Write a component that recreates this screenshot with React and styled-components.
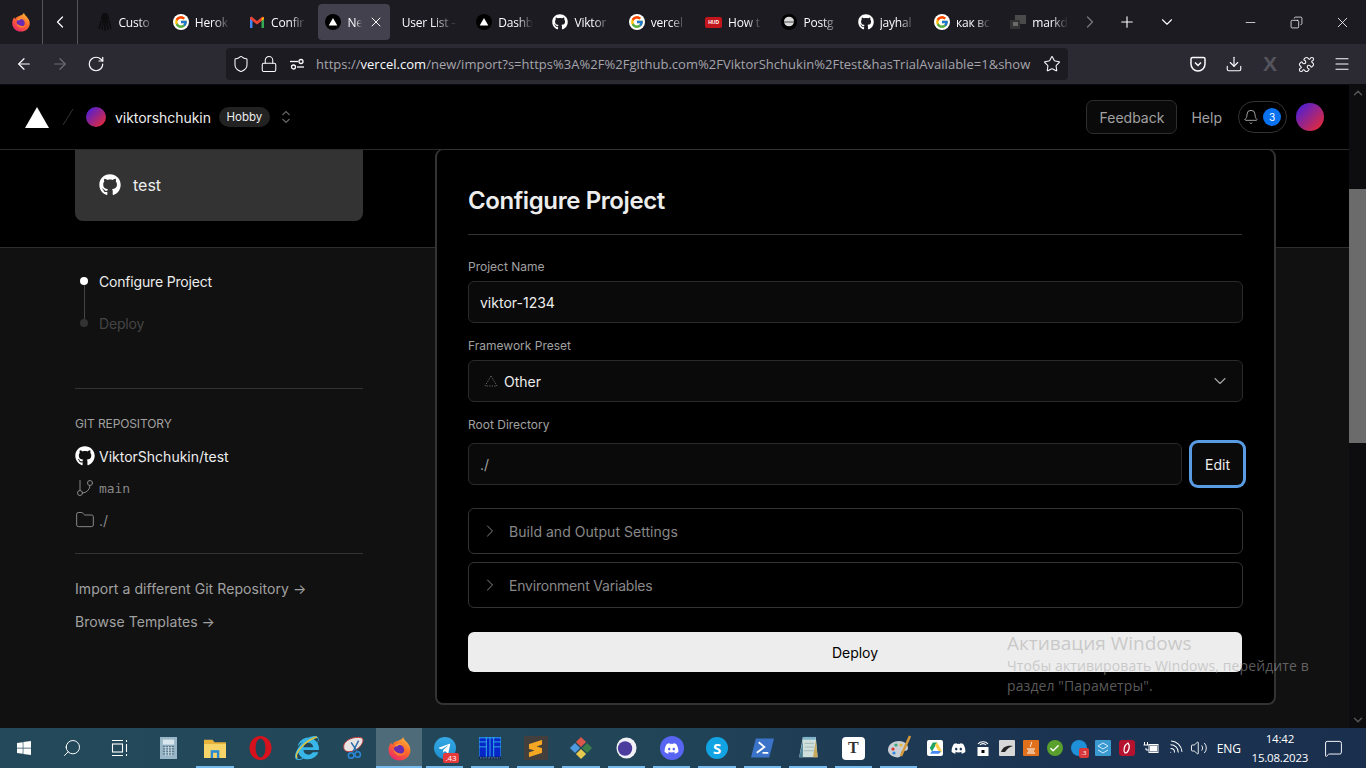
import React from 'react';
import styled, { createGlobalStyle, css } from 'styled-components';
import {
  ArrowLeft, ArrowRight, RotateCw, Shield, Lock, Star, Download, Puzzle, Menu,
  ChevronLeft, ChevronRight, ChevronDown, ChevronUp, Plus, Minus, X, Copy, Bell, GitBranch, Folder,
  Search, Volume2, Wifi, MessageSquare, Check,
} from 'lucide-react';
import { FaGithub, FaTelegramPlane, FaDiscord, FaWindows, FaInternetExplorer } from 'react-icons/fa';
import { FcGoogle } from 'react-icons/fc';
import { SiSublimetext } from 'react-icons/si';

const Global = createGlobalStyle`
  html, body { margin: 0; padding: 0; height: 100%; overflow: hidden; background: #111; }
  * { box-sizing: border-box; }
  #root { height: 100%; }
`;

const Screen = styled.div`
  width: 1366px; height: 768px; display: flex; flex-direction: column; position: relative; overflow: hidden;
  font-family: Inter, "Liberation Sans", sans-serif; color: #ededed;
`;

/* ---------- browser chrome ---------- */
const TabStrip = styled.div`
  height: 44px; flex: none; display: flex; align-items: center; background: #1c1b22; color: #fbfbfe;
  font-family: "Open Sans", sans-serif; font-size: 12px;
`;
const StripBlock = styled.div`
  width: ${p => p.$w}px; height: 44px; flex: none; display: flex; align-items: center; justify-content: center;
  border-right: 1px solid #55545c;
`;
const TabList = styled.div`
  width: 985px; margin-left: 9px; display: flex; overflow: hidden; flex: none;
`;
const Tab = styled.div`
  width: ${p => (p.$bare ? 74.5 : 76.3)}px; flex: none; height: 36px; padding: 0 ${p => (p.$bare ? 9.5 : 9.5)}px; display: flex; align-items: center; gap: 6px;
  border-radius: 4px; position: relative;
  ${p => p.$active && css`background: #42414d; margin: 0 2px; width: 72.3px; padding: 0 6px 0 7.5px;`}
`;
const TabLabel = styled.span`
  flex: 1; min-width: 0; overflow: hidden; white-space: nowrap; letter-spacing: -0.2px;
  -webkit-mask-image: linear-gradient(90deg, #000 55%, transparent 100%);
  mask-image: linear-gradient(90deg, #000 55%, transparent 100%);
`;
const StripBtn = styled.div`
  width: 36px; height: 36px; flex: none; display: flex; align-items: center; justify-content: center;
  margin-left: ${p => p.$ml || 0}px; color: ${p => (p.$dim ? '#77767e' : '#fbfbfe')};
`;
const WindowControls = styled.div`margin-left: auto; display: flex;`;
const WindowBtn = styled.div`
  width: 46.3px; height: 44px; display: flex; align-items: center; justify-content: center; color: #fbfbfe;
`;

const Toolbar = styled.div`
  height: 40px; flex: none; padding: 0 6px; display: flex; align-items: center; background: #2b2a33; color: #fbfbfe;
`;
const ToolBtn = styled.div`
  width: 36px; height: 36px; flex: none; display: flex; align-items: center; justify-content: center;
  color: ${p => (p.$dim ? '#6d6c73' : '#fbfbfe')};
`;
const XMark = styled.span`
  font: 700 21px "Liberation Sans", sans-serif; color: #55545c;
`;
const UrlBar = styled.div`
  width: 842px; height: 32px; margin-left: 112px; margin-right: auto; border-radius: 4px; background: #1c1b22;
  display: flex; align-items: center; padding: 0 2px 0 1px;
`;
const UrlIcon = styled.div`
  width: 28px; height: 28px; flex: none; display: flex; align-items: center; justify-content: center;
`;
const UrlText = styled.div`
  flex: 1; min-width: 0; margin-left: 5px; white-space: nowrap; overflow: hidden; color: #a5a5ab;
  font: 13px "Open Sans", sans-serif; letter-spacing: 0.02px;
`;
const UrlHost = styled.span`color: #fbfbfe;`;

/* ---------- site ---------- */
const Viewport = styled.div`flex: 1; min-height: 0; display: flex;`;
const Site = styled.div`flex: 1; min-width: 0; display: flex; flex-direction: column; background: #000;`;
const Nav = styled.div`
  height: 66px; flex: none; display: flex; align-items: center; padding: 0 25px; background: #000;
  border-top: 1px solid #0b0b14; border-bottom: 1px solid #2b2b2b; font-size: 14px;
`;
const NavName = styled.span`margin-left: 9px; color: #ededed; letter-spacing: -0.05px;`;
const PlanBadge = styled.span`
  margin-left: 8px; height: 20px; width: 51px; border-radius: 10px; background: #222; color: #ededed;
  font-size: 11.5px; display: flex; align-items: center; justify-content: center;
`;
const Avatar = styled.div`
  width: ${p => p.$size}px; height: ${p => p.$size}px; border-radius: 50%; flex: none;
  background: linear-gradient(135deg, #4f1fd6 10%, #e32a3a 90%);
  ${p => p.$ml && css`margin-left: ${p.$ml}px;`}
`;
const NavRight = styled.div`margin-left: auto; display: flex; align-items: center;`;
const FeedbackBtn = styled.div`
  width: 91px; height: 34px; border: 1px solid #2e2e2e; border-radius: 7px; background: #0a0a0a; color: #a1a1a1;
  display: flex; align-items: center; justify-content: center;
`;
const HelpLink = styled.span`margin-left: 14px; color: #a1a1a1;`;
const BellPill = styled.div`
  margin-left: 16px; width: 49px; height: 32px; border: 1px solid #333; border-radius: 16px;
  display: flex; align-items: center; gap: 4px; padding-left: 4px; color: #a1a1a1;
`;
const BellCount = styled.span`
  width: 18px; height: 18px; border-radius: 50%; background: #0a72ef; color: #fff; font-size: 10px;
  display: flex; align-items: center; justify-content: center;
`;

const PageBody = styled.div`
  flex: 1; min-height: 0; display: flex; gap: 72px; padding-left: 75px;
  background: linear-gradient(#000 97px, #2e2e2e 97px, #2e2e2e 98px, #111 98px);
`;
const Side = styled.div`width: 288px; flex: none; display: flex; flex-direction: column;`;
const RepoCard = styled.div`
  height: 71px; flex: none; background: #333; border-radius: 0 0 8px 8px; display: flex; align-items: center;
  padding: 0 0 2px 24px; gap: 12px; font-size: 16px; color: #ededed; margin-bottom: 49px;
`;
const Steps = styled.div`display: flex; flex-direction: column; gap: 20px; margin-bottom: 54px;`;
const Step = styled.div`
  height: 22px; display: flex; align-items: center; gap: 11px; padding-left: 5px; position: relative;
  font-size: 14px; letter-spacing: -0.18px; color: ${p => (p.$on ? '#ededed' : '#444')};
  &::before { content: ''; width: 8px; height: 8px; border-radius: 50%; background: ${p => (p.$on ? '#fff' : '#333')}; }
  ${p => p.$on && css`&::after { content: ''; position: absolute; left: 8.5px; top: 15px; width: 1px; height: 34px; background: #444; }`}
`;
const SideRule = styled.div`height: 1px; background: #333; flex: none;`;
const SideTitle = styled.div`margin: 27px 0 12px; height: 16px; line-height: 16px; font-size: 12px; color: #a1a1a1; letter-spacing: -0.1px;`;
const RepoRow = styled.div`
  height: 24px; margin-bottom: 8px; display: flex; align-items: center; gap: 4px; font-size: 14px;
  color: ${p => (p.$main ? '#ededed' : '#888')};
`;
const Mono = styled.span`font: 13px "DejaVu Sans Mono", "Liberation Mono", monospace; letter-spacing: -0.1px;`;
const SideLinks = styled.div`margin-top: 25px; display: flex; flex-direction: column; gap: 13px;`;
const SideLink = styled.div`height: 20px; line-height: 20px; font-size: 14px; letter-spacing: 0.07px; color: #a1a1a1;`;
const Spacer = styled.div`height: ${p => p.$h}px; flex: none;`;

const Card = styled.div`
  width: 841px; height: 556px; margin-top: -1px; flex: none; background: #000; border: 2px solid #333; border-top-width: 1px; border-radius: 8px;
  padding: 35px 31px 0; display: flex; flex-direction: column; position: relative;
`;
const CardTitle = styled.h1`
  margin: 0; height: 32px; line-height: 32px; font-size: 24px; font-weight: 600; color: #ededed; letter-spacing: -0.4px;
`;
const CardRule = styled.div`height: 1px; background: #333; margin: 17px 1px 24px 0; flex: none;`;
const FieldLabel = styled.div`
  height: 16px; line-height: 16px; font-size: 12px; color: #a1a1a1; margin-top: ${p => p.$mt || 0}px; margin-bottom: ${p => p.$mb}px;
`;
const Field = styled.div`
  height: 42px; flex: ${p => (p.$grow ? 1 : 'none')}; background: #0a0a0a; border: 1px solid #2a2a2a; border-radius: 6px;
  display: flex; align-items: center; padding: 0 12px 0 11px; font-size: 14px; color: ${p => (p.$dim ? '#a1a1a1' : '#ededed')};
`;
const PresetIcon = styled.span`display: flex; margin-left: 4px;`;
const FieldText = styled.span`margin-left: ${p => p.$ml || 0}px; margin-right: auto;`;
const FieldRow = styled.div`display: flex; gap: 10px; margin-bottom: 23px;`;
const EditBtn = styled.div`
  width: 51px; height: 42px; flex: none; background: #0a0a0a; border-radius: 6px; color: #ededed; font-size: 14px;
  display: flex; align-items: center; justify-content: center; box-shadow: 0 0 0 3px #5a9ce4;
`;
const Accordion = styled.div`
  height: 46px; flex: none; border: 1px solid #333; border-radius: 6px; margin-bottom: 8px; display: flex; align-items: center;
  padding-left: 11px; gap: 9px; font-size: 14px; color: #888; letter-spacing: ${p => p.$ls}px;
`;
const DeployBtn = styled.div`
  height: 40px; margin: 16px 1px 0 0; flex: none; background: #ededed; color: #000; border-radius: 6px; font-size: 14px;
  display: flex; align-items: center; justify-content: center;
`;

const Scrollbar = styled.div`
  width: 17px; flex: none; background: #0d0d0f; display: flex; flex-direction: column; align-items: center; color: #555;
`;
const ScrollArrow = styled.div`height: 17px; flex: none; display: flex; align-items: center; justify-content: center;`;
const ScrollTrack = styled.div`flex: 1; width: 100%; padding-top: 88px;`;
const ScrollThumb = styled.div`width: 100%; height: 254px; background: #6b6b6b;`;

const Watermark = styled.div`
  position: absolute; left: 1007px; top: 630px; color: rgba(169,169,169,.54); font-family: "Open Sans", sans-serif; pointer-events: none;
`;
const WatermarkHead = styled.div`font-size: 19px; line-height: 26px;`;
const WatermarkBody = styled.div`font-size: 14px; line-height: 20px; letter-spacing: 0.1px; width: 320px;`;

/* ---------- taskbar ---------- */
const Taskbar = styled.div`
  height: 40px; flex: none; display: flex; align-items: center; color: #fff;
  background: linear-gradient(90deg, #23495b 0%, #224658 45%, #1b3452 75%, #1a2f4e 100%);
  font-family: "Open Sans", sans-serif;
`;
const TaskBtn = styled.div`
  width: ${p => p.$w}px; height: 40px; flex: none; display: flex; align-items: center; justify-content: center; position: relative;
`;
const AppList = styled.div`display: flex; margin-left: 2.5px;`;
const App = styled.div`
  width: ${p => (p.$wide ? 46.1 : 45.4)}px; height: 40px; flex: none; display: flex; align-items: center; justify-content: center; position: relative;
  ${p => p.$active && css`background: rgba(255,255,255,.2);`}
  ${p => p.$running && css`
    &::after { content: ''; position: absolute; bottom: 0; height: 2px; background: #76b9ed;
      left: ${p.$active ? 0 : 4}px; right: ${p.$active ? 0 : 4}px; }
  `}
`;
const BadgeTag = styled.span`
  position: absolute; left: 21px; top: 25px; width: 16px; height: 10px; background: #e5393b; border-radius: 2px; font-size: 8px; line-height: 10px;
  text-align: center; color: #fff;
`;
const Tray = styled.div`display: flex; margin-left: 1.5px; align-items: center;`;
const TrayItem = styled.div`width: 24px; height: 40px; display: flex; align-items: center; justify-content: center; flex: none; position: relative;`;
const Lang = styled.div`width: 36px; text-align: center; font-size: 12px; flex: none;`;
const Clock = styled.div`width: 66px; flex: none; text-align: center; font-size: 11.5px; line-height: 19px; letter-spacing: -0.2px;`;
const Notif = styled.div`width: 42px; flex: none; display: flex; justify-content: center;`;

/* ---------- drawings ---------- */
const Firefox = ({ size = 22, id }) => (
  <svg width={size} height={size} viewBox="0 0 24 24">
    <defs>
      <linearGradient id={`ff${id}`} x1="0.8" y1="0" x2="0.2" y2="1">
        <stop offset="0" stopColor="#ffbd3a" /><stop offset="0.45" stopColor="#ff6a2a" /><stop offset="1" stopColor="#e8256b" />
      </linearGradient>
    </defs>
    <path d="M15.5 1c.6 2.5 2.2 3.5 3.8 5.2C21.4 8.300 22.500 11 22.500 13.500 22.500 19.300 17.800 23.500 12 23.500S1.500 19.300 1.500 13.500C1.500 10.800 2.300 8.200 4 6.200c.1 1 .5 1.800 1 2.300.7-1.700 2.300-3 4.200-3.500C11.800 4.200 14.700 3.500 15.500 1Z" fill={`url(#ff${id})`} />
    <circle cx="11.500" cy="13.300" r="5" fill="#6a2bb0" />
    <path d="M6 12c0 4 3 7 6.500 7 3 0 5.500-2.200 6-5-1 1.800-3 3-5.200 2.800C9.800 16.500 7.500 15 6 12Z" fill="#ff7a2a" />
    <path d="M7 10c2-2.500 6-3.300 8-1.500-2.500-.3-4.500 0-5 1.300Z" fill="#ffa33a" />
  </svg>
);
const VercelFav = () => (
  <svg width="16" height="16" viewBox="0 0 16 16" style={{ flex: 'none' }}><circle cx="8" cy="8" r="8" fill="#000" /><path d="M8 4l4.300 7.500H3.700Z" fill="#fff" /></svg>
);
const GoogleWrap = styled.span`
  width: 16px; height: 16px; flex: none; border-radius: 50%; background: #fff; display: flex; align-items: center; justify-content: center;
`;
const GoogleFav = () => <GoogleWrap><FcGoogle size={14} /></GoogleWrap>;
const GitFav = () => <FaGithub size={16} color="#fff" style={{ flex: 'none' }} />;
const GmailFav = () => (
  <svg width="16" height="16" viewBox="0 0 16 16" style={{ flex: 'none' }}>
    <path d="M1 3.500h2.500V14H1Z" fill="#4285f4" /><path d="M12.500 3.500H15V14h-2.500Z" fill="#34a853" />
    <path d="M1 3.500l1.500-1L8 7l5.500-4.500 1.500 1V5L8 10.500 1 5Z" fill="#ea4335" /><path d="M12.500 4.500L15 3v2l-2.500 2Z" fill="#fbbc04" />
  </svg>
);
const GhostFav = () => (
  <svg width="16" height="20" viewBox="0 0 16 20" style={{ flex: 'none' }}>
    <ellipse cx="8" cy="6" rx="4" ry="5" fill="#0d0d10" /><path d="M4 9L2 17M6 10l-1 8M8 10v9M10 10l1 8M12 9l2 8" stroke="#0d0d10" strokeWidth="1.600" />
  </svg>
);
const HudFav = styled.span`
  width: 17px; height: 11px; flex: none; background: #c3161c; border-radius: 2px; font: 700 5px/11px "Liberation Sans", sans-serif; color: #fff; text-align: center;
`;
const PostgresFav = () => (
  <svg width="16" height="16" viewBox="0 0 16 16" style={{ flex: 'none' }}>
    <circle cx="8" cy="8" r="8" fill="#000" /><ellipse cx="8" cy="7.500" rx="5" ry="4.800" fill="#d8d8d8" /><path d="M3 8h10" stroke="#444" strokeWidth="1" />
  </svg>
);
const MarkFav = () => (
  <svg width="16" height="16" viewBox="0 0 16 16" style={{ flex: 'none' }}>
    <rect x="5" y="1" width="11" height="9" fill="#4a4a4a" /><rect x="0" y="6" width="10" height="9" fill="#333" /><rect x="3" y="8" width="5" height="4" fill="#6a6a6a" />
  </svg>
);
const PermIcon = () => (
  <svg width="16" height="16" viewBox="0 0 16 16" fill="none" stroke="#fbfbfe" strokeWidth="1.300">
    <path d="M1 5.500h8" /><circle cx="12" cy="5.500" r="2" /><circle cx="4.500" cy="11" r="2" /><path d="M8 11h7" />
  </svg>
);
const PocketIcon = () => (
  <svg width="18" height="18" viewBox="0 0 18 18" fill="none" stroke="#fbfbfe" strokeWidth="1.500">
    <path d="M3.500 2.500h11a1.500 1.500 0 0 1 1.500 1.500v5a7 7 0 0 1-14 0V4a1.500 1.500 0 0 1 1.500-1.500Z" /><path d="M6 7.500l3 3 3-3" />
  </svg>
);
const PresetTriangle = () => (
  <svg width="14" height="12" viewBox="0 0 14 12" fill="none" stroke="#666" strokeWidth="1" strokeDasharray="1.300 1.300"><path d="M7 1l6 10H1Z" /></svg>
);
const UpDown = () => (
  <svg width="16" height="16" viewBox="0 0 16 16" fill="none" stroke="#666" strokeWidth="1.200" style={{ marginLeft: 8 }}>
    <path d="M4.500 6L8 2.500 11.500 6M4.500 10L8 13.500 11.500 10" />
  </svg>
);
const Logo = () => <svg width="24" height="21" viewBox="0 0 24 21"><path d="M12 0l12 21H0Z" fill="#fff" /></svg>;
const Slash = () => (
  <svg width="12" height="20" viewBox="0 0 12 20" style={{ margin: '0 12px 0 13px' }}><path d="M11 2L1 18" stroke="#333" strokeWidth="1" /></svg>
);
const TaskView = () => (
  <svg width="18" height="18" viewBox="0 0 18 18" fill="none" stroke="#fff" strokeWidth="1.100">
    <path d="M1 1.500h11M1 16.500h11M15.500 1v2M15.500 5v8M15.500 15v2" /><rect x="1.500" y="5" width="10" height="8" />
  </svg>
);
const Calc = () => (
  <svg width="17" height="22" viewBox="0 0 18 26" preserveAspectRatio="none">
    <rect x="0" y="0" width="18" height="26" fill="#9ab7c8" /><rect x="3" y="3" width="12" height="6" fill="#d9e6ee" />
    <path d="M3 11h12M3 14h12M3 17h12M3 20h12" stroke="#5e7e90" strokeWidth="1.500" /><path d="M6 11v11M9 11v11M12 11v11" stroke="#cfdde6" strokeWidth="1" />
  </svg>
);
const FolderApp = () => (
  <svg width="22" height="20" viewBox="0 0 23 23" preserveAspectRatio="none">
    <path d="M0 2h9l2 3h12v5H0Z" fill="#e7b33c" /><rect x="0" y="7" width="23" height="16" fill="#f7d569" /><rect x="7" y="14" width="9" height="9" fill="#2a8bd2" /><rect x="9.500" y="17" width="4" height="6" fill="#f7d569" />
  </svg>
);
const Opera = () => (
  <svg width="23" height="24" viewBox="0 0 23 24"><ellipse cx="11.500" cy="12" rx="11" ry="12" fill="#d8121c" /><ellipse cx="11.500" cy="12" rx="5" ry="9.500" fill="#1f4456" /></svg>
);
const IEWrap = styled.span`position: relative; display: flex;`;
const IERing = styled.svg`position: absolute; left: -2px; top: -2px;`;
const IE = () => (
  <IEWrap>
    <FaInternetExplorer size={24} color="#38b6e8" />
    <IERing width="28" height="28" viewBox="0 0 28 28" fill="none"><path d="M4 24C1 20 12 6 24 3" stroke="#e8c53a" strokeWidth="1.500" /></IERing>
  </IEWrap>
);
const Snip = () => (
  <svg width="26" height="26" viewBox="0 0 26 28" fill="none">
    <path d="M3 12C3 6 14 1 22 3c3 1 2 6-2 10-5 5-12 6-15 4-2-1-2-3-2-5Z" fill="#e9e4e4" stroke="#b33" strokeWidth="1" />
    <path d="M11 8l6 9M19 6l-6 12" stroke="#2c6da8" strokeWidth="1.600" /><circle cx="18" cy="21" r="3" stroke="#2c8ad8" strokeWidth="1.600" /><circle cx="11" cy="22" r="3" stroke="#2c8ad8" strokeWidth="1.600" />
  </svg>
);
const TelegramWrap = styled.span`
  width: 22px; height: 22px; border-radius: 50%; background: linear-gradient(#36a9e6, #1d8fce); display: flex; align-items: center; justify-content: center; color: #fff;
`;
const GridApp = () => (
  <svg width="22" height="23" viewBox="0 0 24 28" preserveAspectRatio="none">
    <rect x="0" y="0" width="24" height="25" fill="#0626c9" /><path d="M0 1h24M0 6h8M16 6h8M0 12h8M16 12h8" stroke="#35c0e8" strokeWidth="1" /><path d="M0 0v25M8 0v25M12 0v25M16 0v25M24 0v25" stroke="#35c0e8" strokeWidth="1" />
    <rect x="0" y="24" width="24" height="3" fill="#0b2038" /><path d="M1 25.500h22" stroke="#8ad" strokeDasharray="2 1" />
  </svg>
);
const SublimeWrap = styled.span`
  width: 24px; height: 24px; background: #423f3c; display: flex; align-items: center; justify-content: center; color: #f5a623;
`;
const GitApp = () => (
  <svg width="24" height="24" viewBox="0 0 26 26">
    <path d="M13 1l5.500 5.500-5.500 5.500-5.500-5.500Z" fill="#d9574b" /><path d="M6.500 7.500L12 13l-5.500 5.500L1 13Z" fill="#4f9be0" />
    <path d="M19.500 7.500L25 13l-5.500 5.500L14 13Z" fill="#3d7d4a" /><path d="M13 14l5.500 5.500L13 25l-5.500-5.500Z" fill="#e7c94f" />
  </svg>
);
const EclipseApp = () => (
  <svg width="21" height="22" viewBox="0 0 22 24" preserveAspectRatio="none"><ellipse cx="11" cy="12" rx="10.500" ry="11.500" fill="#f1f1f6" /><ellipse cx="9.500" cy="12.500" rx="7.500" ry="8" fill="#4b3c9e" /></svg>
);
const DiscordWrap = styled.span`
  width: 24px; height: 24px; border-radius: 50%; background: #5865f2; color: #fff; display: flex; align-items: center; justify-content: center;
`;
const SkypeTile = styled.span`
  width: 22px; height: 22px; border-radius: 50%; background: #12a3e2; color: #fff; display: flex; align-items: center; justify-content: center;
  font: 700 15px "Open Sans", sans-serif;
`;
const PowerShell = () => (
  <svg width="23" height="20" viewBox="0 0 24 20">
    <path d="M5 0h19l-5 20H0Z" fill="#3a73c8" /><path d="M8 4l6 5-8 6M12 15h6" stroke="#fff" strokeWidth="1.800" fill="none" />
  </svg>
);
const Notepad = () => (
  <svg width="23" height="24" viewBox="0 0 24 26">
    <path d="M7 1h14l2 22H3Z" fill="#cfe0dc" /><path d="M7 1h14v3H7Z" fill="#7fb3c9" /><path d="M9 8h10M9 12h10M8 16h11" stroke="#a0b5b5" /><path d="M3 23L7 5v18Z" fill="#4b7f96" /><path d="M18 23h5l-2-18Z" fill="#c9a85a" />
  </svg>
);
const TypoTile = styled.span`
  width: 23px; height: 23px; border-radius: 4px; background: #fff; color: #333; display: flex; align-items: center; justify-content: center;
  font: 700 16px "Liberation Serif", serif;
`;
const Palette = () => (
  <svg width="26" height="26" viewBox="0 0 26 26">
    <path d="M2 15C2 9 8 6 13 6c5 0 9 3 9 7 0 3-3 3-5 3-2 0-2 3-2 4 0 2-3 3-6 2-4-1-7-4-7-7Z" fill="#c9cfd4" />
    <circle cx="7" cy="14" r="1.600" fill="#d33" /><circle cx="10" cy="10" r="1.600" fill="#3a7" /><circle cx="15" cy="10" r="1.600" fill="#e8b73a" /><circle cx="8" cy="18" r="1.600" fill="#38d" />
    <path d="M24 1l-9 20" stroke="#d79a3a" strokeWidth="2.500" />
  </svg>
);
const Drive = () => (
  <svg width="16" height="16" viewBox="0 0 16 16">
    <rect width="16" height="16" rx="2" fill="#fff" /><path d="M5.800 2.500h4.400L5 11.500 2.800 8Z" fill="#1fa463" /><path d="M10.200 2.500L15 11l-2.200 2.500-5-8.500Z" fill="#ffd04b" /><path d="M5 11h9l-2 2.800H3.200Z" fill="#4688f4" />
  </svg>
);
const LockTray = () => (
  <svg width="14" height="18" viewBox="0 0 14 18" fill="none">
    <path d="M2 5a6 5 0 0 1 10 0M4 6a3.500 3 0 0 1 6 0" stroke="#fff" strokeWidth="1.200" /><rect x="1.500" y="8" width="11" height="9" fill="#fff" /><rect x="5.500" y="11" width="3" height="3" fill="#000" />
  </svg>
);
const Tile = styled.span`
  width: 16px; height: 16px; flex: none; background: ${p => p.$bg}; border-radius: ${p => p.$r || 1}px; display: flex; align-items: center; justify-content: center; color: #fff;
`;
const Battery = () => (
  <svg width="16" height="14" viewBox="0 0 16 14" fill="none" stroke="#fff">
    <path d="M1.500 1v3M4.500 1v3M0.500 4h5M3 7v2h3" /><rect x="6" y="3.500" width="9" height="8" /><rect x="7.500" y="5" width="6" height="5" fill="#fff" />
  </svg>
);
const RedBadge = styled.span`
  position: absolute; left: 12px; top: 20px; width: 10px; height: 10px; background: #d8383a; border-radius: 2px; font-size: 6px; line-height: 10px; text-align: center; color: #fff;
`;

const tabs = [
  [<GhostFav />, 'Custo'], [<GoogleFav />, 'Herok'], [<GmailFav />, 'Confir'],
];
const tabsAfter = [
  [<VercelFav />, 'Dashb'], [<GitFav />, 'Viktor'], [<GoogleFav />, 'vercel'], [<HudFav>HUD</HudFav>, 'How t'],
  [<PostgresFav />, 'Postg'], [<GitFav />, 'jayhal'], [<GoogleFav />, 'как вс'], [<MarkFav />, 'markd'],
];

export default function AppPage() {
  return (
    <Screen>
      <Global />
      <TabStrip>
        <StripBlock $w={43}><Firefox id="a" size={20} /></StripBlock>
        <StripBlock $w={35}><ChevronLeft size={20} strokeWidth={1.5} /></StripBlock>
        <TabList>
          {tabs.map(([icon, label]) => <Tab key={label}>{icon}<TabLabel>{label}</TabLabel></Tab>)}
          <Tab $active><VercelFav /><TabLabel>Ne</TabLabel><X size={16} strokeWidth={1.5} /></Tab>
          <Tab $bare><TabLabel>User List –</TabLabel></Tab>
          {tabsAfter.map(([icon, label]) => <Tab key={label}>{icon}<TabLabel>{label}</TabLabel></Tab>)}
        </TabList>
        <StripBtn $dim><ChevronRight size={20} strokeWidth={1.5} /></StripBtn>
        <StripBtn $ml={1}><Plus size={18} strokeWidth={1.5} /></StripBtn>
        <StripBtn $ml={4}><ChevronDown size={18} strokeWidth={1.5} /></StripBtn>
        <WindowControls>
          <WindowBtn><Minus size={15} strokeWidth={1.2} /></WindowBtn>
          <WindowBtn><Copy size={13} strokeWidth={1.4} style={{ transform: 'scaleX(-1)' }} /></WindowBtn>
          <WindowBtn><X size={17} strokeWidth={1.2} /></WindowBtn>
        </WindowControls>
      </TabStrip>
      <Toolbar>
        <ToolBtn><ArrowLeft size={18} strokeWidth={1.6} /></ToolBtn>
        <ToolBtn $dim><ArrowRight size={18} strokeWidth={1.6} /></ToolBtn>
        <ToolBtn><RotateCw size={18} strokeWidth={1.6} /></ToolBtn>
        <UrlBar>
          <UrlIcon><Shield size={18} strokeWidth={1.4} /></UrlIcon>
          <UrlIcon><Lock size={18} strokeWidth={1.4} /></UrlIcon>
          <UrlIcon><PermIcon /></UrlIcon>
          <UrlText>https://<UrlHost>vercel.com</UrlHost>/new/import?s=https%3A%2F%2Fgithub.com%2FViktorShchukin%2Ftest&amp;hasTrialAvailable=1&amp;show</UrlText>
          <UrlIcon><Star size={18} strokeWidth={1.4} /></UrlIcon>
        </UrlBar>
        <ToolBtn><PocketIcon /></ToolBtn>
        <ToolBtn><Download size={18} strokeWidth={1.5} /></ToolBtn>
        <ToolBtn><XMark>X</XMark></ToolBtn>
        <ToolBtn><Puzzle size={17} strokeWidth={1.5} /></ToolBtn>
        <ToolBtn><Menu size={18} strokeWidth={1.5} /></ToolBtn>
      </Toolbar>

      <Viewport>
        <Site>
          <Nav>
            <Logo />
            <Slash />
            <Avatar $size={20} />
            <NavName>viktorshchukin</NavName>
            <PlanBadge>Hobby</PlanBadge>
            <UpDown />
            <NavRight>
              <FeedbackBtn>Feedback</FeedbackBtn>
              <HelpLink>Help</HelpLink>
              <BellPill><Bell size={16} strokeWidth={1.5} /><BellCount>3</BellCount></BellPill>
              <Avatar $size={28} $ml={9} />
            </NavRight>
          </Nav>
          <PageBody>
            <Side>
              <RepoCard><FaGithub size={22} color="#fff" />test</RepoCard>
              <Steps>
                <Step $on>Configure Project</Step>
                <Step>Deploy</Step>
              </Steps>
              <SideRule />
              <SideTitle>GIT REPOSITORY</SideTitle>
              <RepoRow $main><FaGithub size={20} color="#fff" />ViktorShchukin/test</RepoRow>
              <RepoRow><GitBranch size={20} strokeWidth={1.2} /><Mono>main</Mono></RepoRow>
              <RepoRow><Folder size={20} strokeWidth={1.2} />./</RepoRow>
              <Spacer $h={13} />
              <SideRule />
              <SideLinks>
                <SideLink>Import a different Git Repository →</SideLink>
                <SideLink>Browse Templates →</SideLink>
              </SideLinks>
            </Side>
            <Card>
              <CardTitle>Configure Project</CardTitle>
              <CardRule />
              <FieldLabel $mb={6}>Project Name</FieldLabel>
              <Field>viktor-1234</Field>
              <FieldLabel $mt={15} $mb={6}>Framework Preset</FieldLabel>
              <Field>
                <PresetIcon><PresetTriangle /></PresetIcon>
                <FieldText $ml={6}>Other</FieldText>
                <ChevronDown size={20} strokeWidth={1.4} color="#a1a1a1" />
              </Field>
              <FieldLabel $mt={15} $mb={10}>Root Directory</FieldLabel>
              <FieldRow>
                <Field $grow $dim>./</Field>
                <EditBtn>Edit</EditBtn>
              </FieldRow>
              <Accordion $ls={0.04}><ChevronRight size={20} strokeWidth={1.2} />Build and Output Settings</Accordion>
              <Accordion $ls={-0.2}><ChevronRight size={20} strokeWidth={1.2} />Environment Variables</Accordion>
              <DeployBtn>Deploy</DeployBtn>
            </Card>
          </PageBody>
        </Site>
        <Scrollbar>
          <ScrollArrow><ChevronUp size={14} strokeWidth={2.5} /></ScrollArrow>
          <ScrollTrack>
            <ScrollThumb />
          </ScrollTrack>
          <ScrollArrow><ChevronDown size={14} strokeWidth={2.5} /></ScrollArrow>
        </Scrollbar>
      </Viewport>

      <Taskbar>
        <TaskBtn $w={47}><FaWindows size={16} /></TaskBtn>
        <TaskBtn $w={50}><Search size={20} strokeWidth={1.2} style={{ transform: 'scaleX(-1)' }} /></TaskBtn>
        <TaskBtn $w={46}><TaskView /></TaskBtn>
        <AppList>
          <App $wide><Calc /></App>
          <App $wide $running><FolderApp /></App>
          <App $wide><Opera /></App>
          <App $wide><IE /></App>
          <App $wide><Snip /></App>
          <App $wide $running $active><Firefox id="b" size={25} /></App>
          <App $running><TelegramWrap><FaTelegramPlane size={13} /></TelegramWrap><BadgeTag>.43</BadgeTag></App>
          <App $running><GridApp /></App>
          <App $running><SublimeWrap><SiSublimetext size={17} /></SublimeWrap></App>
          <App $running><GitApp /></App>
          <App $running><EclipseApp /></App>
          <App $running><DiscordWrap><FaDiscord size={15} /></DiscordWrap></App>
          <App $running><SkypeTile>S</SkypeTile></App>
          <App $running><PowerShell /></App>
          <App $running><Notepad /></App>
          <App $running><TypoTile>T</TypoTile></App>
          <App $running><Palette /></App>
        </AppList>
        <Tray>
          <TrayItem><Drive /></TrayItem>
          <TrayItem><FaDiscord size={15} /></TrayItem>
          <TrayItem><LockTray /></TrayItem>
          <TrayItem><Tile $bg="#d8d8d8"><svg width="14" height="10" viewBox="0 0 14 10"><path d="M1 9c2-5 5-7 12-6-4 1-6 3-8 6Z" fill="#222" /></svg></Tile></TrayItem>
          <TrayItem><Tile $bg="#e0701c"><svg width="10" height="12" viewBox="0 0 10 12" fill="none" stroke="#fff"><path d="M5 0c2 2-2 3 0 5M1 7h8M2 9h6M1 11h8" /></svg></Tile></TrayItem>
          <TrayItem><Tile $bg="#5aa02c" $r={8}><Check size={11} strokeWidth={3} /></Tile></TrayItem>
          <TrayItem><Tile $bg="#1f8fd8" $r={8} /><RedBadge>.3</RedBadge></TrayItem>
          <TrayItem><Tile $bg="#3a9ad0"><svg width="12" height="12" viewBox="0 0 12 12" fill="none" stroke="#cfeaff"><path d="M1 4l5-3 5 3-5 3ZM1 8l5 3 5-3" /></svg></Tile></TrayItem>
          <TrayItem><Tile $bg="#b4122e" $r={3}><svg width="10" height="12" viewBox="0 0 10 12" fill="none" stroke="#fff" strokeWidth="1.200"><path d="M6 1C2 3 1 9 3 11c3 0 6-6 3-10Z" /></svg></Tile></TrayItem>
          <TrayItem><Battery /></TrayItem>
          <TrayItem><Wifi size={18} strokeWidth={1.3} style={{ transform: 'rotate(45deg)' }} /></TrayItem>
          <TrayItem><Volume2 size={18} strokeWidth={1.2} /></TrayItem>
        </Tray>
        <Lang>ENG</Lang>
        <Clock>14:42<br />15.08.2023</Clock>
        <Notif><MessageSquare size={19} strokeWidth={1.2} /></Notif>
      </Taskbar>

      <Watermark>
        <WatermarkHead>Активация Windows</WatermarkHead>
        <WatermarkBody>Чтобы активировать Windows, перейдите в<br />раздел "Параметры".</WatermarkBody>
      </Watermark>
    </Screen>
  );
}
